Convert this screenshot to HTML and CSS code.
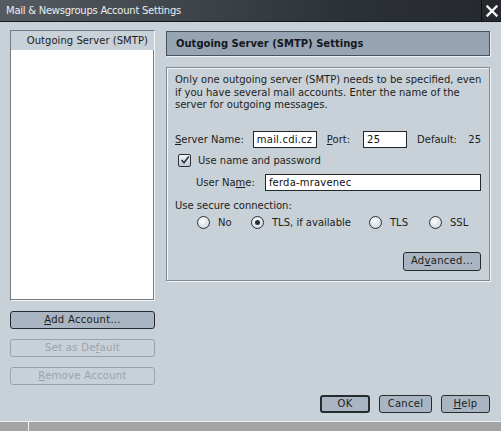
FILE: index.html
```html
<!DOCTYPE html>
<html>
<head>
<meta charset="utf-8">
<link rel="stylesheet" href="styles.css">
</head>
<body>
<div class="window">
  <div class="titlebar">
    <div class="title">Mail &amp; Newsgroups Account Settings</div>
    <div class="close"><svg width="12" height="12" viewBox="0 0 12 12"><path d="M1.5 1.5 L10.5 10.5 M10.5 1.5 L1.5 10.5" stroke="#f4f4f4" stroke-width="2.4" stroke-linecap="square"/></svg></div>
  </div>
  <div class="main">
    <div class="left">
      <div class="list">
        <div class="list-item">Outgoing Server (SMTP)</div>
      </div>
      <button class="btn btn-wide"><u>A</u>dd Account...</button>
      <button class="btn btn-wide disabled">Set as De<u>f</u>ault</button>
      <button class="btn btn-wide disabled"><u>R</u>emove Account</button>
    </div>
    <div class="right">
      <div class="header">Outgoing Server (SMTP) Settings</div>
      <div class="box">
        <p class="desc">Only one outgoing server (SMTP) needs to be specified, even<br>if you have several mail accounts. Enter the name of the<br>server for outgoing messages.</p>
        <div class="row server-row">
          <span class="label"><u>S</u>erver Name:</span>
          <span class="input in-server">mail.cdi.cz</span>
          <span class="label port-label"><u>P</u>ort:</span>
          <span class="input in-port">25</span>
          <span class="label default-label">Default:</span>
          <span class="label default-val">25</span>
        </div>
        <div class="row check-row">
          <span class="checkbox"><svg width="10" height="10" viewBox="0 0 10 10"><path d="M1.5 5 L4 7.8 L8.8 1.6" fill="none" stroke="#2a3038" stroke-width="1.6"/></svg></span>
          <span class="label">Use name and password</span>
        </div>
        <div class="row user-row">
          <span class="label">User Na<u>m</u>e:</span>
          <span class="input in-user">ferda-mravenec</span>
        </div>
        <div class="secure-label">Use secure connection:</div>
        <div class="row radio-row">
          <span class="radio-opt opt-no"><span class="radio"></span>No</span>
          <span class="radio-opt opt-tlsa"><span class="radio on"></span>TLS, if available</span>
          <span class="radio-opt opt-tls"><span class="radio"></span>TLS</span>
          <span class="radio-opt opt-ssl"><span class="radio"></span>SSL</span>
        </div>
        <div class="adv-row">
          <button class="btn btn-adv">Ad<u>v</u>anced...</button>
        </div>
      </div>
    </div>
  </div>
  <div class="footer">
    <button class="btn btn-ok">OK</button>
    <button class="btn btn-cancel">Cancel</button>
    <button class="btn btn-help"><u>H</u>elp</button>
  </div>
  <div class="statusbar">
    <div class="seg seg1"></div>
    <div class="seg seg2"></div>
  </div>
</div>
</body>
</html>
```

FILE: styles.css
```css
* { box-sizing: border-box; }
html, body {
  margin: 0;
  padding: 0;
  width: 501px;
  height: 431px;
  overflow: hidden;
}
body {
  font-family: "DejaVu Sans", sans-serif;
  font-size: 10px;
  color: #1c1e20;
  background: #c8d0d8;
}
u { text-decoration: underline; text-underline-offset: 1px; }
.window {
  width: 501px;
  height: 431px;
  display: flex;
  flex-direction: column;
  background: #c8d0d8;
}
.titlebar {
  height: 22px;
  flex: none;
  display: flex;
  background: linear-gradient(to right, #555b61, #2c3136 70%, #25292d);
  border-bottom: 1px solid #15181b;
}
.title {
  flex: 1;
  color: #eceeef;
  font-size: 10px;
  letter-spacing: -0.25px;
  line-height: 21px;
  padding-left: 6px;
}
.close {
  width: 20px;
  border-left: 1px solid #0d0f10;
  display: flex;
  align-items: center;
  justify-content: center;
  background: #25292d;
}
.main {
  display: flex;
  gap: 11px;
  padding: 8px 0 0 10px;
  height: 373px;
  flex: none;
}
.left {
  width: 145px;
  display: flex;
  flex-direction: column;
}
.list {
  height: 273px;
  background: #ffffff;
  border-top: 1px solid #737b83;
  border-left: 1px solid #737b83;
  border-right: 1px solid #f4f6f8;
  border-bottom: 1px solid #f4f6f8;
  box-shadow: inset -1px -1px 0 #737b83;
  margin-bottom: 10px;
}
.list-item {
  height: 19px;
  background: #c8d0d8;
  line-height: 19px;
  text-align: right;
  padding-right: 6px;
  letter-spacing: 0.05px;
}
.btn {
  font-family: "DejaVu Sans", sans-serif;
  font-size: 10px;
  color: #1c1e20;
  background: #a9b5c2;
  border: 1px solid #262b30;
  border-radius: 3px;
  height: 18px;
  padding: 0;
  line-height: 16px;
  letter-spacing: 0.3px;
}
.btn-wide {
  width: 145px;
  margin-bottom: 10px;
}
.btn.disabled {
  background: #c8d0d8;
  border-color: #99a3ad;
  color: #99a3ad;
}
.right {
  width: 324px;
  display: flex;
  flex-direction: column;
}
.header {
  height: 25px;
  margin-top: 1px;
  background: #96a4b4;
  border: 1px solid #48525c;
  box-shadow: 1px 1px 0 #eef1f4;
  font-weight: bold;
  line-height: 23px;
  padding-left: 9px;
  color: #15181b;
}
.box {
  margin-top: 11px;
  height: 214px;
  border: 1px solid #818991;
  box-shadow: 1px 1px 0 #f2f4f6, inset 1px 1px 0 #f2f4f6;
  padding: 6px 8px 0 8px;
  display: flex;
  flex-direction: column;
}
.desc {
  margin: 0;
  line-height: 12.5px;
  white-space: nowrap;
}
.row {
  display: flex;
  align-items: center;
  white-space: nowrap;
}
.input {
  background: #ffffff;
  border: 1px solid #22272c;
  height: 17px;
  line-height: 15px;
  padding-left: 3px;
  color: #111;
  letter-spacing: 0.2px;
}
.server-row { margin-top: 19px; }
.in-server { width: 64px; margin-left: 9px; }
.port-label { margin-left: 10px; }
.in-port { width: 44px; margin-left: 13px; }
.default-label { margin-left: 10px; }
.default-val { margin-left: auto; }
.check-row { margin-top: 6px; padding-left: 3px; }
.checkbox {
  width: 13px;
  height: 13px;
  border: 1px solid #2a3038;
  border-radius: 2px;
  background: linear-gradient(#f4f6f8, #c0c8d0);
  display: flex;
  align-items: center;
  justify-content: center;
  margin-right: 7px;
}
.user-row { margin-top: 7px; padding-left: 21px; }
.in-user { width: 216px; margin-left: 10px; }
.secure-label { margin-top: 8px; line-height: 13px; }
.radio-row { margin-top: 4px; padding-left: 22px; height: 14px; }
.radio-opt {
  display: flex;
  align-items: center;
  flex: none;
}
.opt-no { width: 54px; }
.opt-tlsa { width: 118px; }
.opt-tls { width: 60px; }
.radio {
  width: 13px;
  height: 13px;
  border: 1px solid #2a3038;
  border-radius: 50%;
  background: radial-gradient(circle at 40% 35%, #ffffff, #c3ccd4);
  margin-right: 8px;
  position: relative;
  flex: none;
}
.radio.on::after {
  content: "";
  position: absolute;
  left: 3px;
  top: 3px;
  width: 5px;
  height: 5px;
  border-radius: 50%;
  background: #2a3038;
}
.adv-row {
  display: flex;
  justify-content: flex-end;
  margin-top: 22px;
}
.btn-adv { width: 78px; height: 19px; }
.footer {
  height: 26px;
  flex: none;
  display: flex;
  justify-content: flex-end;
  gap: 9px;
  padding-right: 11px;
}
.btn-ok { width: 50px; border-width: 2px; line-height: 14px; }
.btn-cancel { width: 53px; }
.btn-help { width: 49px; }
.statusbar {
  flex: 1;
  display: flex;
  background: #a4a3a6;
  border-top: 1px solid #f0f0f0;
}
.seg1 { width: 29px; border-right: 1px solid #f0f0f0; }
.seg2 { flex: 1; }
```
